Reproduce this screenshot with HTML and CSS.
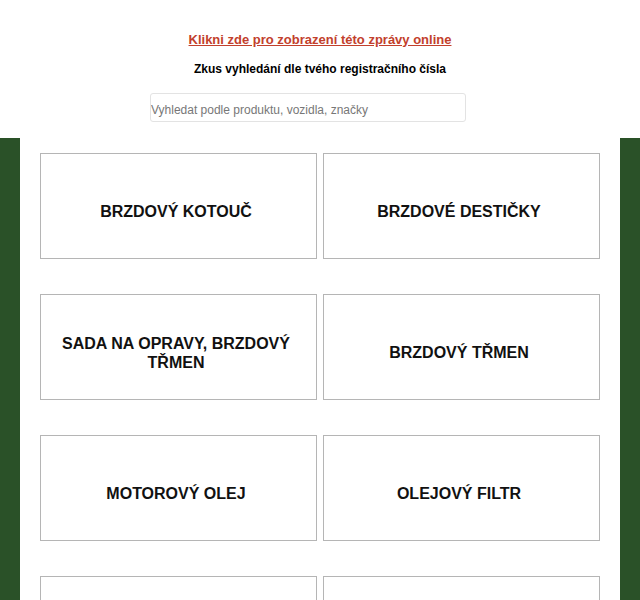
FILE: index.html
```html
<!DOCTYPE html>
<html lang="cs">
<head>
<meta charset="utf-8">
<link rel="stylesheet" href="styles.css">
</head>
<body>
<div class="header">
  <a class="online-link" href="#">Klikni zde pro zobrazení této zprávy online</a>
  <div class="subtitle">Zkus vyhledání dle tvého registračního čísla</div>
  <div class="search-wrap">
    <input class="search" type="text" placeholder="Vyhledat podle produktu, vozidla, značky">
  </div>
</div>
<div class="main">
  <div class="inner">
    <div class="grid">
      <div class="card">BRZDOVÝ KOTOUČ</div>
      <div class="card">BRZDOVÉ DESTIČKY</div>
      <div class="card">SADA NA OPRAVY, BRZDOVÝ TŘMEN</div>
      <div class="card">BRZDOVÝ TŘMEN</div>
      <div class="card">MOTOROVÝ OLEJ</div>
      <div class="card">OLEJOVÝ FILTR</div>
      <div class="card">&nbsp;</div>
      <div class="card">&nbsp;</div>
    </div>
  </div>
</div>
</body>
</html>
```
FILE: styles.css
```css
html, body {
  margin: 0;
  padding: 0;
  background: #ffffff;
  font-family: "Liberation Sans", Arial, sans-serif;
}
.header {
  padding-top: 30px;
  height: 108px;
  display: flex;
  flex-direction: column;
  align-items: center;
}
.online-link {
  font-size: 13px;
  font-weight: bold;
  line-height: 20px;
  color: #c2402c;
  text-decoration: underline;
}
.subtitle {
  margin-top: 10px;
  font-size: 12px;
  font-weight: bold;
  line-height: 18px;
  color: #000;
}
.search-wrap {
  margin-top: 15px;
  align-self: flex-start;
  margin-left: 150px;
}
.search {
  box-sizing: border-box;
  width: 316px;
  height: 29px;
  border: 1px solid #e3e3e3;
  border-radius: 3px;
  padding: 4px 0 0 0;
  font-family: "Liberation Sans", Arial, sans-serif;
  font-size: 12px;
  color: #333;
  outline: none;
}
.search::placeholder {
  color: #777;
}
.main {
  background: #2a5128;
  padding: 0 20px;
}
.inner {
  background: #ffffff;
  padding: 15px 20px 40px;
}
.grid {
  display: grid;
  grid-template-columns: 277px 277px;
  column-gap: 6px;
  row-gap: 35px;
}
.card {
  box-sizing: border-box;
  height: 106px;
  border: 1px solid #b5b5b5;
  display: flex;
  align-items: center;
  justify-content: center;
  text-align: center;
  padding: 11px 25px 0 20px;
  font-size: 16px;
  font-weight: bold;
  line-height: 19px;
  color: #111;
}
```
